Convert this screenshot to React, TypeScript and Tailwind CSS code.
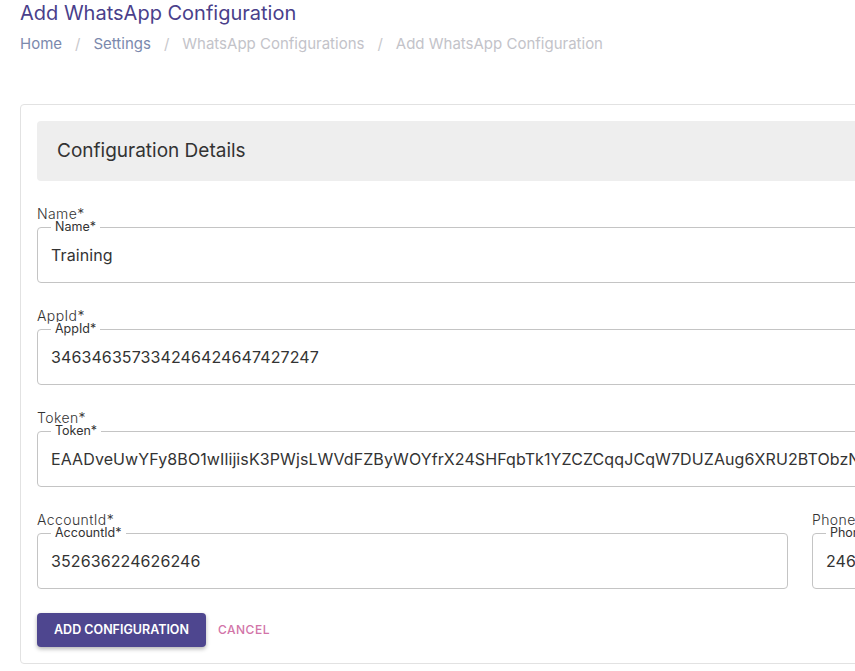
import type { ReactNode } from "react";

const fields = [
  { label: "Name*", value: "Training" },
  { label: "AppId*", value: "346346357334246424647427247" },
  {
    label: "Token*",
    value:
      "EAADveUwYFy8BO1wIlijisK3PWjsLWVdFZByWOYfrX24SHFqbTk1YZCZCqqJCqW7DUZAug6XRU2BTObzNZAZBx8qZCkWnZA1rLmZBoZCe2ZBZA7ZCsWqZA",
  },
];

function Field({ label, value }: { label: string; value: string }): ReactNode {
  return (
    <div className="flex flex-col">
      <label className="mb-[9px] text-[14px] font-light leading-[8px] tracking-[0.4px] text-[#333]">
        {label}
      </label>
      <div className="relative h-14 rounded border border-[#c4c4c4]">
        <span className="absolute -top-[8px] left-[13px] bg-white px-[4px] text-[12.5px] leading-[14px] text-[#333]">
          {label}
        </span>
        <div className="flex h-full items-center overflow-hidden whitespace-nowrap px-[13px] text-[16px] tracking-[0.1px] text-[#333]">
          {value}
        </div>
      </div>
    </div>
  );
}

export default function App(): ReactNode {
  return (
    <div className="w-full overflow-hidden bg-white font-['Inter',sans-serif]">
      <div className="w-[1600px] px-5 pb-2">
        <h1 className="pt-[1px] text-[20px] leading-[24px] text-[#4a3f8b]">
          Add WhatsApp Configuration
        </h1>
        <nav className="mt-[9px] flex items-center gap-[13px] text-[15px] leading-[20px]">
          <span className="text-[#7b89ad]">Home</span>
          <span className="text-[#c8c8cc]">/</span>
          <span className="text-[#7b89ad]">Settings</span>
          <span className="text-[#c8c8cc]">/</span>
          <span className="text-[#c3c3c9]">WhatsApp Configurations</span>
          <span className="text-[#c8c8cc]">/</span>
          <span className="text-[#c3c3c9]">Add WhatsApp Configuration</span>
        </nav>

        <div className="mt-[50px] w-[1560px] rounded border border-[#e2e2e2] p-4">
          <div className="flex h-[60px] items-center rounded bg-[#eeeeee] px-5 text-[19px] text-[#333]">
            Configuration Details
          </div>
          <div className="mt-[29px] flex flex-col gap-[29px]">
            {fields.map((f) => (
              <Field key={f.label} label={f.label} value={f.value} />
            ))}
            <div className="grid grid-cols-2 gap-6">
              <Field label="AccountId*" value="352636224626246" />
              <Field label="PhoneNumberId*" value="246246246246246" />
            </div>
          </div>
          <div className="mt-6 flex items-center gap-3">
            <button className="h-[34px] w-[169px] rounded bg-[#4e468f] text-[12.5px] font-semibold uppercase text-white shadow-[0_2px_4px_rgba(0,0,0,0.3)]">
              Add Configuration
            </button>
            <button className="text-[12px] font-medium uppercase tracking-[0.5px] text-[#d274a8]">
              Cancel
            </button>
          </div>
        </div>
      </div>
    </div>
  );
}
